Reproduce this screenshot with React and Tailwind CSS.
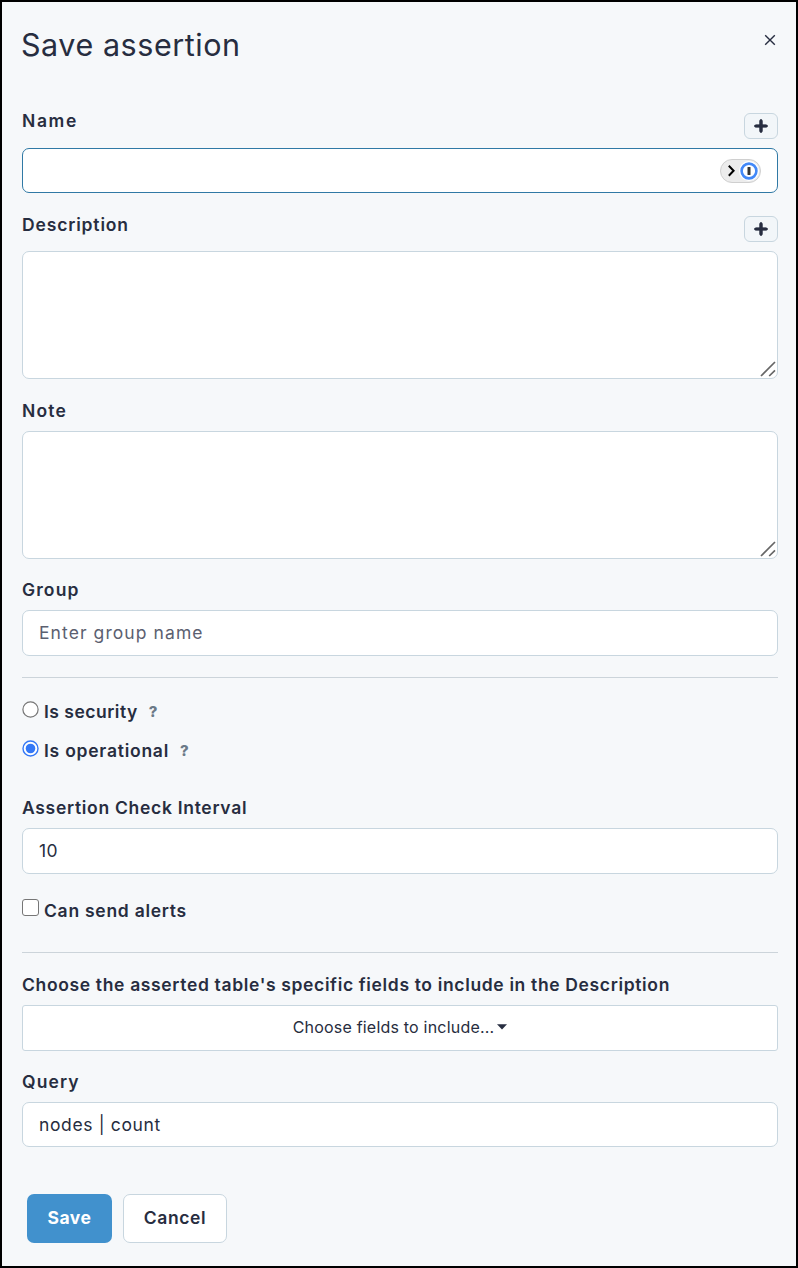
import React from "react";

const field = "w-full rounded-[7px] border border-[#c8d6df] bg-white";

function Label({ children, className = "" }) {
  return (
    <div className={`h-5 whitespace-nowrap text-[17.5px] font-semibold leading-5 ${className}`}>{children}</div>
  );
}

function AddButton() {
  return (
    <button className="flex h-[26px] w-[34px] items-center justify-center rounded-md border border-[#c8d6df] bg-[#f2f6f9]">
      <svg width="14" height="14" viewBox="0 0 14 14" className="block">
        <path d="M7 2.2v9.6M2.2 7h9.6" stroke="#272d40" strokeWidth="3.2" strokeLinecap="round" />
        <path d="M7 1.5v11M1.5 7h11" stroke="#272d40" strokeWidth="2.6" strokeLinecap="round" />
      </svg>
    </button>
  );
}

function TextArea() {
  return (
    <div className={`flex h-32 items-end justify-end ${field}`}>
      <svg width="18" height="18" viewBox="0 0 18 18" className="block">
        <path d="M2 16L16 2M10.2 16L16 10.4" stroke="#666" strokeWidth="1.7" fill="none" />
      </svg>
    </div>
  );
}

function Help() {
  return <span className="text-[15px] font-extrabold text-[#6b7a88]">?</span>;
}

export default function App() {
  return (
    <div className="h-[1268px] w-[798px] border-2 border-black bg-[#f6f8fa] pl-5 pr-[18px] font-['Inter','Liberation_Sans',sans-serif] text-[#272d40]">
      <div className="flex h-[111px] items-start justify-between">
        <h1 className="-ml-px mt-[23px] whitespace-nowrap text-[30.5px] font-normal leading-10 tracking-[0.55px]">Save assertion</h1>
        <svg width="16" height="16" viewBox="0 0 16 16" className="mt-[30px] block">
          <path d="M3.2 3.2l9.6 9.6M12.8 3.2l-9.6 9.6" stroke="#272d40" strokeWidth="1.4" />
        </svg>
      </div>

      <div className="flex h-[35px] items-start justify-between">
        <Label className="-mt-[2px] tracking-[1.6px]">Name</Label>
        <AddButton />
      </div>
      <div className="flex h-[45px] w-full items-center justify-end rounded-[7px] border border-[#3079a5] bg-white pr-4">
        <svg width="41" height="24" viewBox="0 0 41 24" className="block">
          <rect x="0.5" y="0.5" width="40" height="23" rx="11.5" fill="#ececec" stroke="#cfcfcf" />
          <path d="M8.8 6.8l4.8 5-4.8 5" fill="none" stroke="#000" strokeWidth="2" />
          <circle cx="29" cy="12" r="10" fill="#fff" />
          <circle cx="29" cy="12" r="7.4" fill="#fff" stroke="#4288f8" strokeWidth="2.6" />
          <rect x="27.5" y="8" width="3" height="8" rx="0.5" fill="#333" />
        </svg>
      </div>

      <div className="mt-[23px] flex h-[35px] items-start justify-between">
        <Label className="-mt-[1px] tracking-[0.85px]">Description</Label>
        <AddButton />
      </div>
      <TextArea />

      <Label className="mt-[22px] mb-[10px] tracking-[1.2px]">Note</Label>
      <TextArea />

      <Label className="mt-[21px] mb-[10px] tracking-[1.1px]">Group</Label>
      <div className={`flex h-[46px] items-center pl-4 text-[17.5px] tracking-[1.08px] text-[#5b6070] ${field}`}>
        <span>Enter group name</span>
      </div>

      <div className="mt-[21px] h-px bg-[#ccd4da]" />

      <div className="mt-[24px] flex h-5 items-center">
        <svg width="17" height="17" viewBox="0 0 17 17" className="-mt-[6px] mr-[5px] block">
          <circle cx="8.5" cy="8.5" r="7.6" fill="#fff" stroke="#767676" strokeWidth="1.2" />
        </svg>
        <Label className="mr-[11px] tracking-[0.5px]">Is security</Label>
        <Help />
      </div>
      <div className="mt-[19px] flex h-5 items-center">
        <svg width="17" height="17" viewBox="0 0 17 17" className="-mt-[6px] mr-[5px] block">
          <circle cx="8.5" cy="8.5" r="7.5" fill="#fff" stroke="#3478f6" strokeWidth="1.4" />
          <circle cx="8.5" cy="8.5" r="4.8" fill="#3478f6" />
        </svg>
        <Label className="mr-[11px] tracking-[0.76px]">Is operational</Label>
        <Help />
      </div>

      <Label className="mt-[37px] mb-[10px] tracking-[0.7px]">Assertion Check Interval</Label>
      <div className={`flex h-[46px] items-center pl-4 text-[17.5px] ${field}`}>
        <span className="tracking-[0.5px]">10</span>
      </div>

      <div className="mt-[27px] flex h-5 items-center">
        <div className="-mt-[8px] mr-[5px] h-[17px] w-[17px] rounded-[3px] border border-[#767676] bg-white" />
        <Label className="tracking-[0.73px]">Can send alerts</Label>
      </div>

      <div className="mt-[31px] h-px bg-[#ccd4da]" />

      <Label className="mt-[22px] mb-[10px] tracking-[0.65px]">Choose the asserted table's specific fields to include in the Description</Label>
      <div className="flex h-[46px] w-full items-center justify-center rounded-[3px] border border-[#c8d6df] bg-white pb-[2px] text-[16px]">
        <span className="tracking-[0.2px]">Choose fields to include...</span>
        <svg width="10" height="6" viewBox="0 0 10 6" className="ml-[3px] block">
          <path d="M0 0.3h10L5 5.5z" fill="#272d40" />
        </svg>
      </div>

      <Label className="mt-[21px] mb-[10px] tracking-[1.1px]">Query</Label>
      <div className={`flex h-[45px] items-center pl-4 pt-px text-[17.5px] tracking-[0.64px] ${field}`}>
        <span>nodes | count</span>
      </div>

      <div className="mt-[47px] flex gap-[11px] pl-[5px] text-[17.5px] font-semibold">
        <button className="h-[49px] w-[85px] rounded-[7px] bg-[#4191cd] font-bold tracking-[0.5px] text-white">Save</button>
        <button className="h-[49px] w-[104px] rounded-[7px] border border-[#c8d6df] bg-white tracking-[0.6px]">Cancel</button>
      </div>
    </div>
  );
}
